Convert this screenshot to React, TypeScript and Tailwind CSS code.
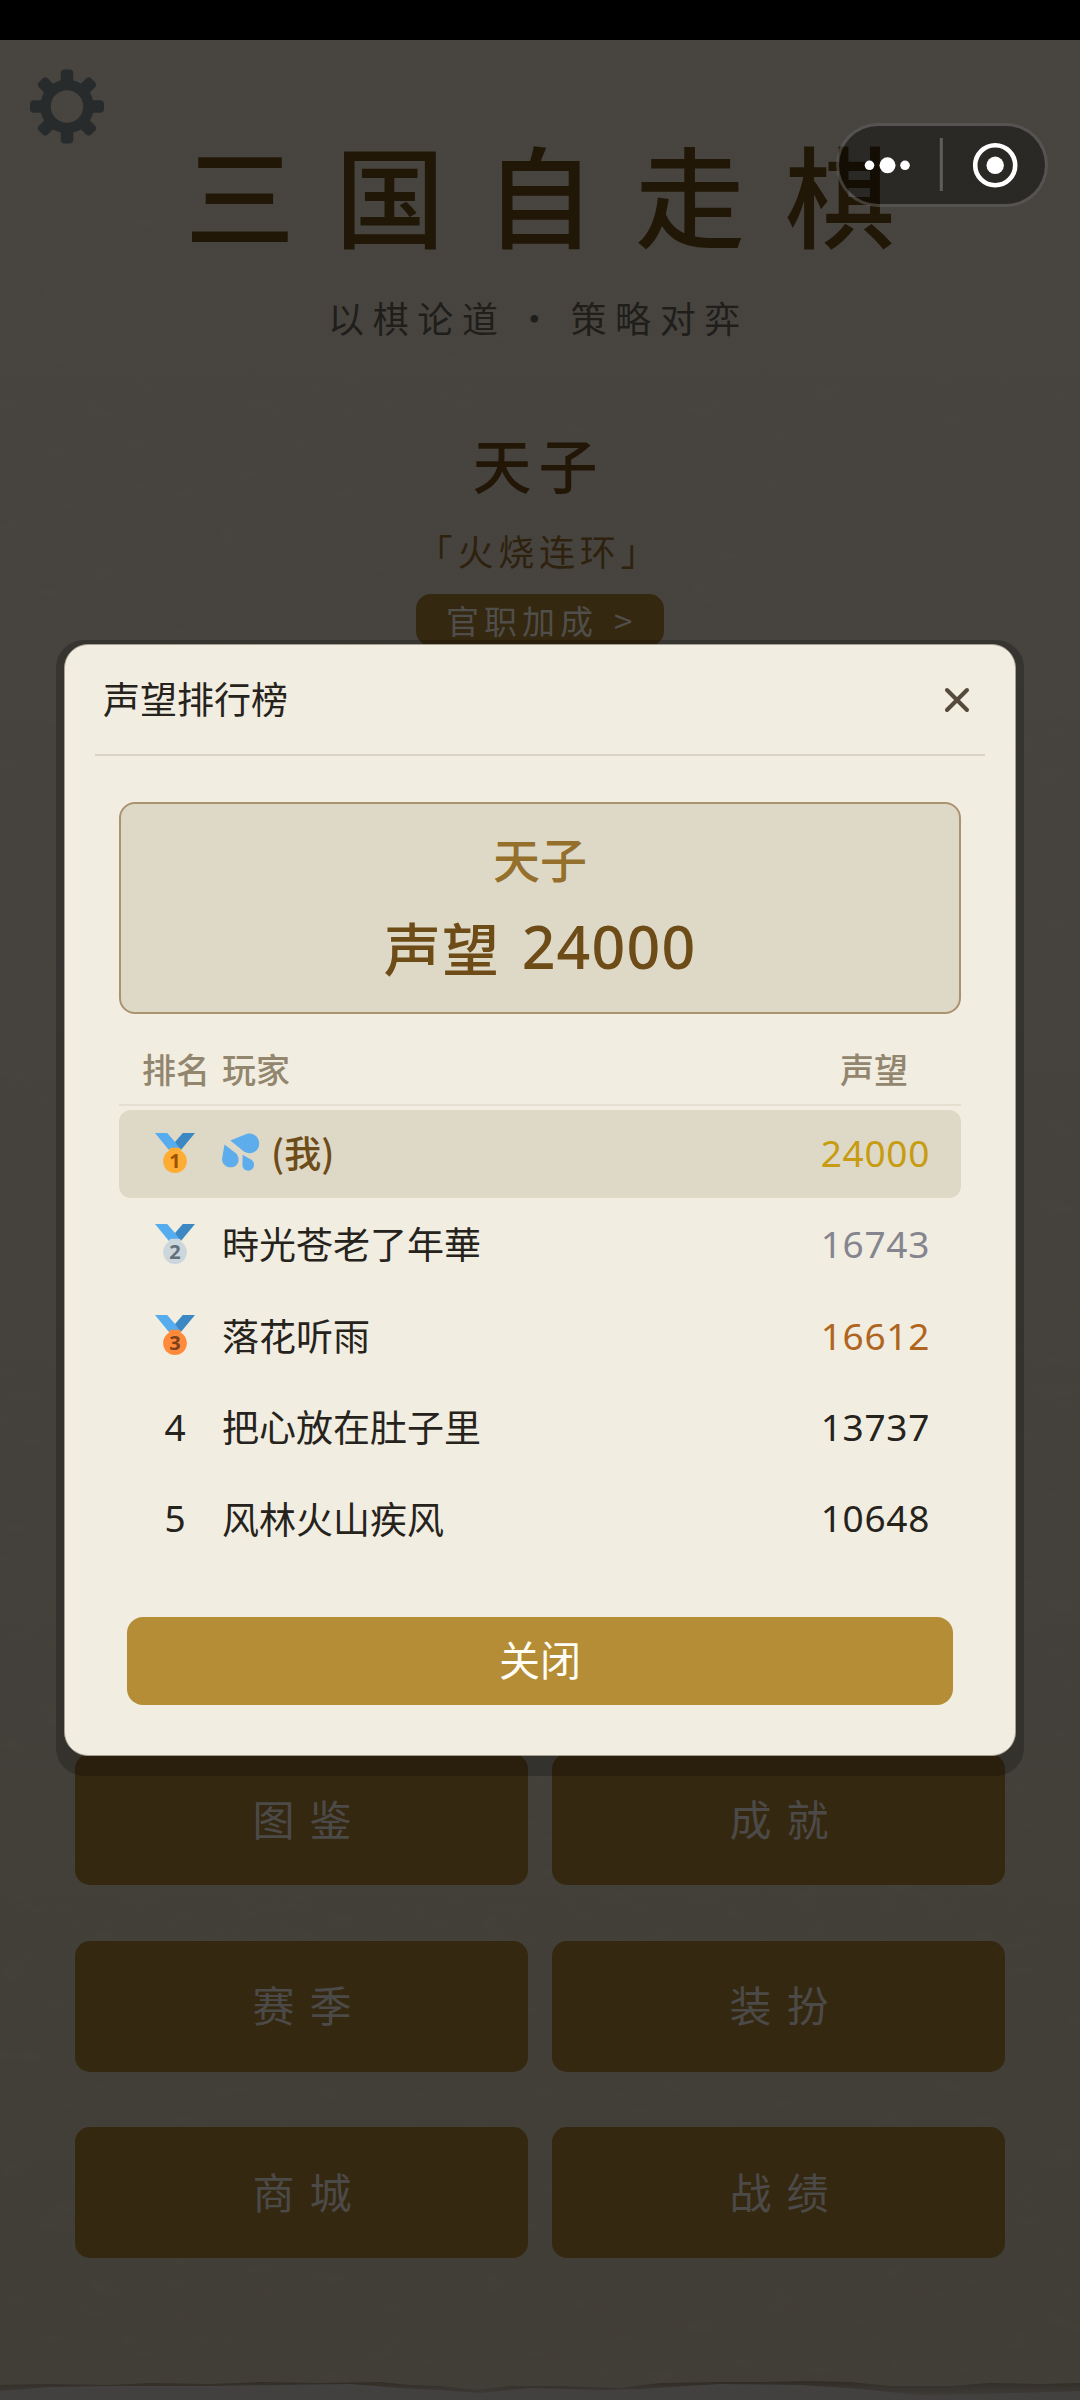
import { clsx } from "clsx";
import { X } from "lucide-react";

type Player = {
  rank: number;
  name: string;
  score: number;
  isMe?: boolean;
};

const PLAYERS: Player[] = [
  { rank: 1, name: "(我)", score: 24000, isMe: true },
  { rank: 2, name: "時光苍老了年華", score: 16743 },
  { rank: 3, name: "落花听雨", score: 16612 },
  { rank: 4, name: "把心放在肚子里", score: 13737 },
  { rank: 5, name: "风林火山疾风", score: 10648 },
];

const MENU = ["图鉴", "成就", "赛季", "装扮", "商城", "战绩"];

const MEDALS = [
  { fill: "#FFAC33", ink: "#9E5200" },
  { fill: "#CCD6DD", ink: "#627077" },
  { fill: "#FF8A3B", ink: "#7C4119" },
];

const SCORE_COLORS = ["text-[#c79c10]", "text-[#85858f]", "text-[#b0651f]"];

function Medal({ rank }: { rank: number }) {
  const { fill, ink } = MEDALS[rank - 1];
  return (
    <svg viewBox="0 0 36 36" className="size-10">
      <path fill="#55ACEE" d="M18 8l-7-8H0l14 17 11.521-4.75z" />
      <path fill="#3B88C3" d="M25 0l-7 8 5.39 7.312 1.227-1.489L36 0z" />
      <path
        fill={fill}
        d="M23.205 16.026c.08-.217.131-.448.131-.693 0-1.104-.896-2-2-2h-6.667c-1.105 0-2 .896-2 2 0 .245.05.476.131.693-3.258 1.826-5.464 5.307-5.464 9.307C7.336 31.224 12.111 36 18.002 36s10.667-4.776 10.667-10.667c0-4-2.206-7.481-5.464-9.307z"
      />
      <text
        x="18"
        y="31.5"
        fill={ink}
        textAnchor="middle"
        className="font-['Noto_Sans',sans-serif] text-[18px] font-bold"
      >
        {rank}
      </text>
    </svg>
  );
}

function SweatDrops() {
  return (
    <svg viewBox="0 0 38 38" className="size-[38px]" fill="#5DADEC">
      <path d="M8.3 7.6 24.5 0.9C31 -1 37.2 4 37.2 10.4C37.2 18.5 29 22.5 22.2 18.8Z" />
      <path d="M2.5 11.4 14.2 20.4C17.5 24 17.3 29.5 14 32.4C8 37 0 33 0 26Z" />
      <path d="M20.6 21.8 29.4 26.7C32 28.5 32.8 32 31.3 34.7C28 40 20.5 37.8 20.4 32Z" />
    </svg>
  );
}

function Gear() {
  return (
    <svg viewBox="0 0 74 74" className="h-[75px] w-[74px]" fill="#282b2b">
      {[0, 45, 90, 135].map((deg) => (
        <g key={deg} transform={`rotate(${deg} 37 37)`}>
          <rect x="30.7" y="0" width="12.6" height="18" rx="4" />
          <rect x="30.7" y="56" width="12.6" height="18" rx="4" />
        </g>
      ))}
      <circle cx="37" cy="37" r="21.5" fill="none" stroke="#282b2b" strokeWidth="10.5" />
    </svg>
  );
}

function Paper() {
  return (
    <svg className="absolute inset-0" width="1080" height="2400" viewBox="0 0 1080 2400">
      <defs>
        <linearGradient id="paper" x1="0" y1="0" x2="0" y2="1">
          <stop offset="0" stopColor="#484540" />
          <stop offset="0.5" stopColor="#45423d" />
          <stop offset="1" stopColor="#413e37" />
        </linearGradient>
        <linearGradient id="tear" x1="0" y1="0" x2="0" y2="1">
          <stop offset="0" stopColor="#312c24" />
          <stop offset="1" stopColor="#434140" />
        </linearGradient>
        <filter id="grain" x="0" y="0" width="100%" height="100%">
          <feTurbulence type="fractalNoise" baseFrequency="0.025 0.06" numOctaves="4" seed="7" />
          <feColorMatrix values="0 0 0 0 0.1  0 0 0 0 0.09  0 0 0 0 0.07  0.9 0 0 0 -0.36" />
        </filter>
      </defs>
      <rect width="1080" height="2400" fill="url(#paper)" />
      <rect width="1080" height="2400" filter="url(#grain)" opacity="0.14" />
      <path
        fill="url(#tear)"
        d="M0 2385L50 2384L110 2385L150 2383L210 2384L260 2382L320 2383L380 2382L410 2385L440 2386L478 2390L510 2386L560 2386L620 2388L660 2383L720 2382L760 2382L810 2381L850 2382L890 2386L950 2386L990 2383L1040 2384L1080 2383V2400H0Z"
      />
      <path
        fill="#434140"
        d="M0 2391L50 2387L110 2386L210 2386L350 2384L400 2388L440 2390L480 2393L530 2388L600 2390L640 2389L720 2384L800 2385L860 2389L920 2395L980 2394L1080 2391V2400H0Z"
      />
    </svg>
  );
}

function Capsule() {
  return (
    <div className="absolute top-[123px] left-[836px] flex h-[84px] w-[212px] items-center rounded-full border-[3px] border-white/20 bg-black/40">
      <svg viewBox="0 0 206 78" className="h-full w-full" fill="#fff">
        <circle cx="30.5" cy="39.3" r="4.8" />
        <circle cx="48.5" cy="39.3" r="8" />
        <circle cx="66" cy="39.3" r="4.8" />
        <rect x="100.8" y="12" width="3" height="53" fillOpacity="0.25" />
        <circle cx="156.2" cy="39.3" r="20" fill="none" stroke="#fff" strokeWidth="4.6" />
        <circle cx="156.2" cy="39.3" r="8.7" />
      </svg>
    </div>
  );
}

function Home() {
  return (
    <div className="relative flex flex-col items-center">
      <div className="h-10 w-full bg-black" />
      <div className="flex h-[90px] w-full px-[30px] pt-[29px]">
        <Gear />
      </div>
      <h1 className="pl-[40px] text-[110px] leading-[124px] font-medium tracking-[40px] text-[#211707]">
        三国自走棋
      </h1>
      <p className="mt-[37px] flex pr-[3px] text-[36px] leading-[52px] tracking-[8.6px] text-[#1f1e1a]">
        以棋论道
        <span className="w-[64px] text-center">·</span>
        策略对弈
      </p>
      <h2 className="mt-[83px] pr-[3px] text-[59px] leading-[76px] font-medium tracking-[7px] text-[#221607]">天子</h2>
      <p className="mt-[24px] pr-[2px] text-[36px] leading-[48px] tracking-[4.8px] text-[#2e220f]">「火烧连环」</p>
      <div className="mt-5 flex h-[52px] w-[248px] items-center rounded-[15px] bg-[#352810] pl-[30px] text-[33px] leading-none tracking-[5px] text-[#504e4b]">
        官职加成
        <span className="ml-[16px]">&gt;</span>
      </div>
    </div>
  );
}

function Menu() {
  return (
    <div className="relative mt-[1108px] grid grid-cols-2 gap-x-6 gap-y-[55.5px] px-[75px]">
      {MENU.map((label) => (
        <button
          key={label}
          className="h-[131px] rounded-[15px] bg-[#352810] pb-[5px] pl-[16px] text-[42px] tracking-[15px] text-[#4c4a48]"
        >
          {label}
        </button>
      ))}
    </div>
  );
}

function PlayerRow({ player }: { player: Player }) {
  const { rank, name, score, isMe } = player;
  return (
    <li
      className={clsx(
        "flex h-[88px] items-center rounded-xl pr-[31px] pb-[3px] pl-[24px] text-[37px]",
        isMe ? "bg-[#ded8c7] text-[#6e4c18]" : "text-[#26231c]"
      )}
    >
      <div className="flex w-16 justify-center font-['Noto_Sans',sans-serif]">
        {rank <= 3 ? <Medal rank={rank} /> : rank}
      </div>
      <div className={clsx("ml-[15px] flex items-center pb-px", isMe && "font-medium")}>
        {isMe && (
          <span className="mr-[11px]">
            <SweatDrops />
          </span>
        )}
        <span className="leading-[48px]">{name}</span>
      </div>
      <span
        className={clsx(
          "ml-auto font-['Noto_Sans',sans-serif] tracking-[0.7px]",
          SCORE_COLORS[rank - 1]
        )}
      >
        {score}
      </span>
    </li>
  );
}

function RankingDialog() {
  return (
    <div className="absolute top-[640px] left-14 w-[968px] rounded-[28px] bg-black/22 px-2 pt-1 pb-5">
      <div className="h-[1112px] rounded-3xl border border-[#a79f8f] bg-[#f1ede0] px-[30px]">
        <div className="flex h-[111px] items-center justify-between border-b-2 border-[#d8d3c4] pr-[8px] pl-[8px]">
          <h3 className="pb-[2px] text-[37px] text-[#26231c]">声望排行榜</h3>
          <X size={40} strokeWidth={2.4} className="text-[#554a3c]" />
        </div>

        <div className="px-6 pt-[46px]">
          <div className="flex h-[212px] flex-col items-center rounded-2xl border-2 border-[#ab9370] bg-[#ded8c7]">
            <div className="mt-[22px] text-[47px] leading-[64px] font-medium text-[#94702c]">天子</div>
            <div className="mt-[16px] flex text-[57px] leading-[80px] font-medium text-[#6e4c18]">
              <span className="tracking-[1.5px]">声望</span>
              <span className="ml-[21px] font-['Noto_Sans',sans-serif] text-[59px] tracking-[1.2px]">24000</span>
            </div>
          </div>

          <div className="flex h-[92px] items-center border-b-2 border-[#e4dfd0] pt-[18px] pr-[53px] pl-[23px] text-[34px] font-medium text-[#93866f]">
            <span>排名</span>
            <span className="ml-[12px]">玩家</span>
            <span className="ml-auto">声望</span>
          </div>

          <ul className="mt-1 flex flex-col gap-[3.4px]">
            {PLAYERS.map((p) => (
              <PlayerRow key={p.rank} player={p} />
            ))}
          </ul>

          <button className="mx-2 mt-[53px] h-[88px] w-[826px] rounded-2xl bg-[#b48d36] pb-[3px] text-[41px] text-[#fffdf5]">
            关闭
          </button>
        </div>
      </div>
    </div>
  );
}

export default function App() {
  return (
    <div className="relative h-[2400px] w-[1080px] overflow-hidden bg-[#474540] font-['Noto_Sans_CJK_SC',sans-serif]">
      <Paper />
      <Home />
      <Menu />
      <RankingDialog />
      <Capsule />
    </div>
  );
}
